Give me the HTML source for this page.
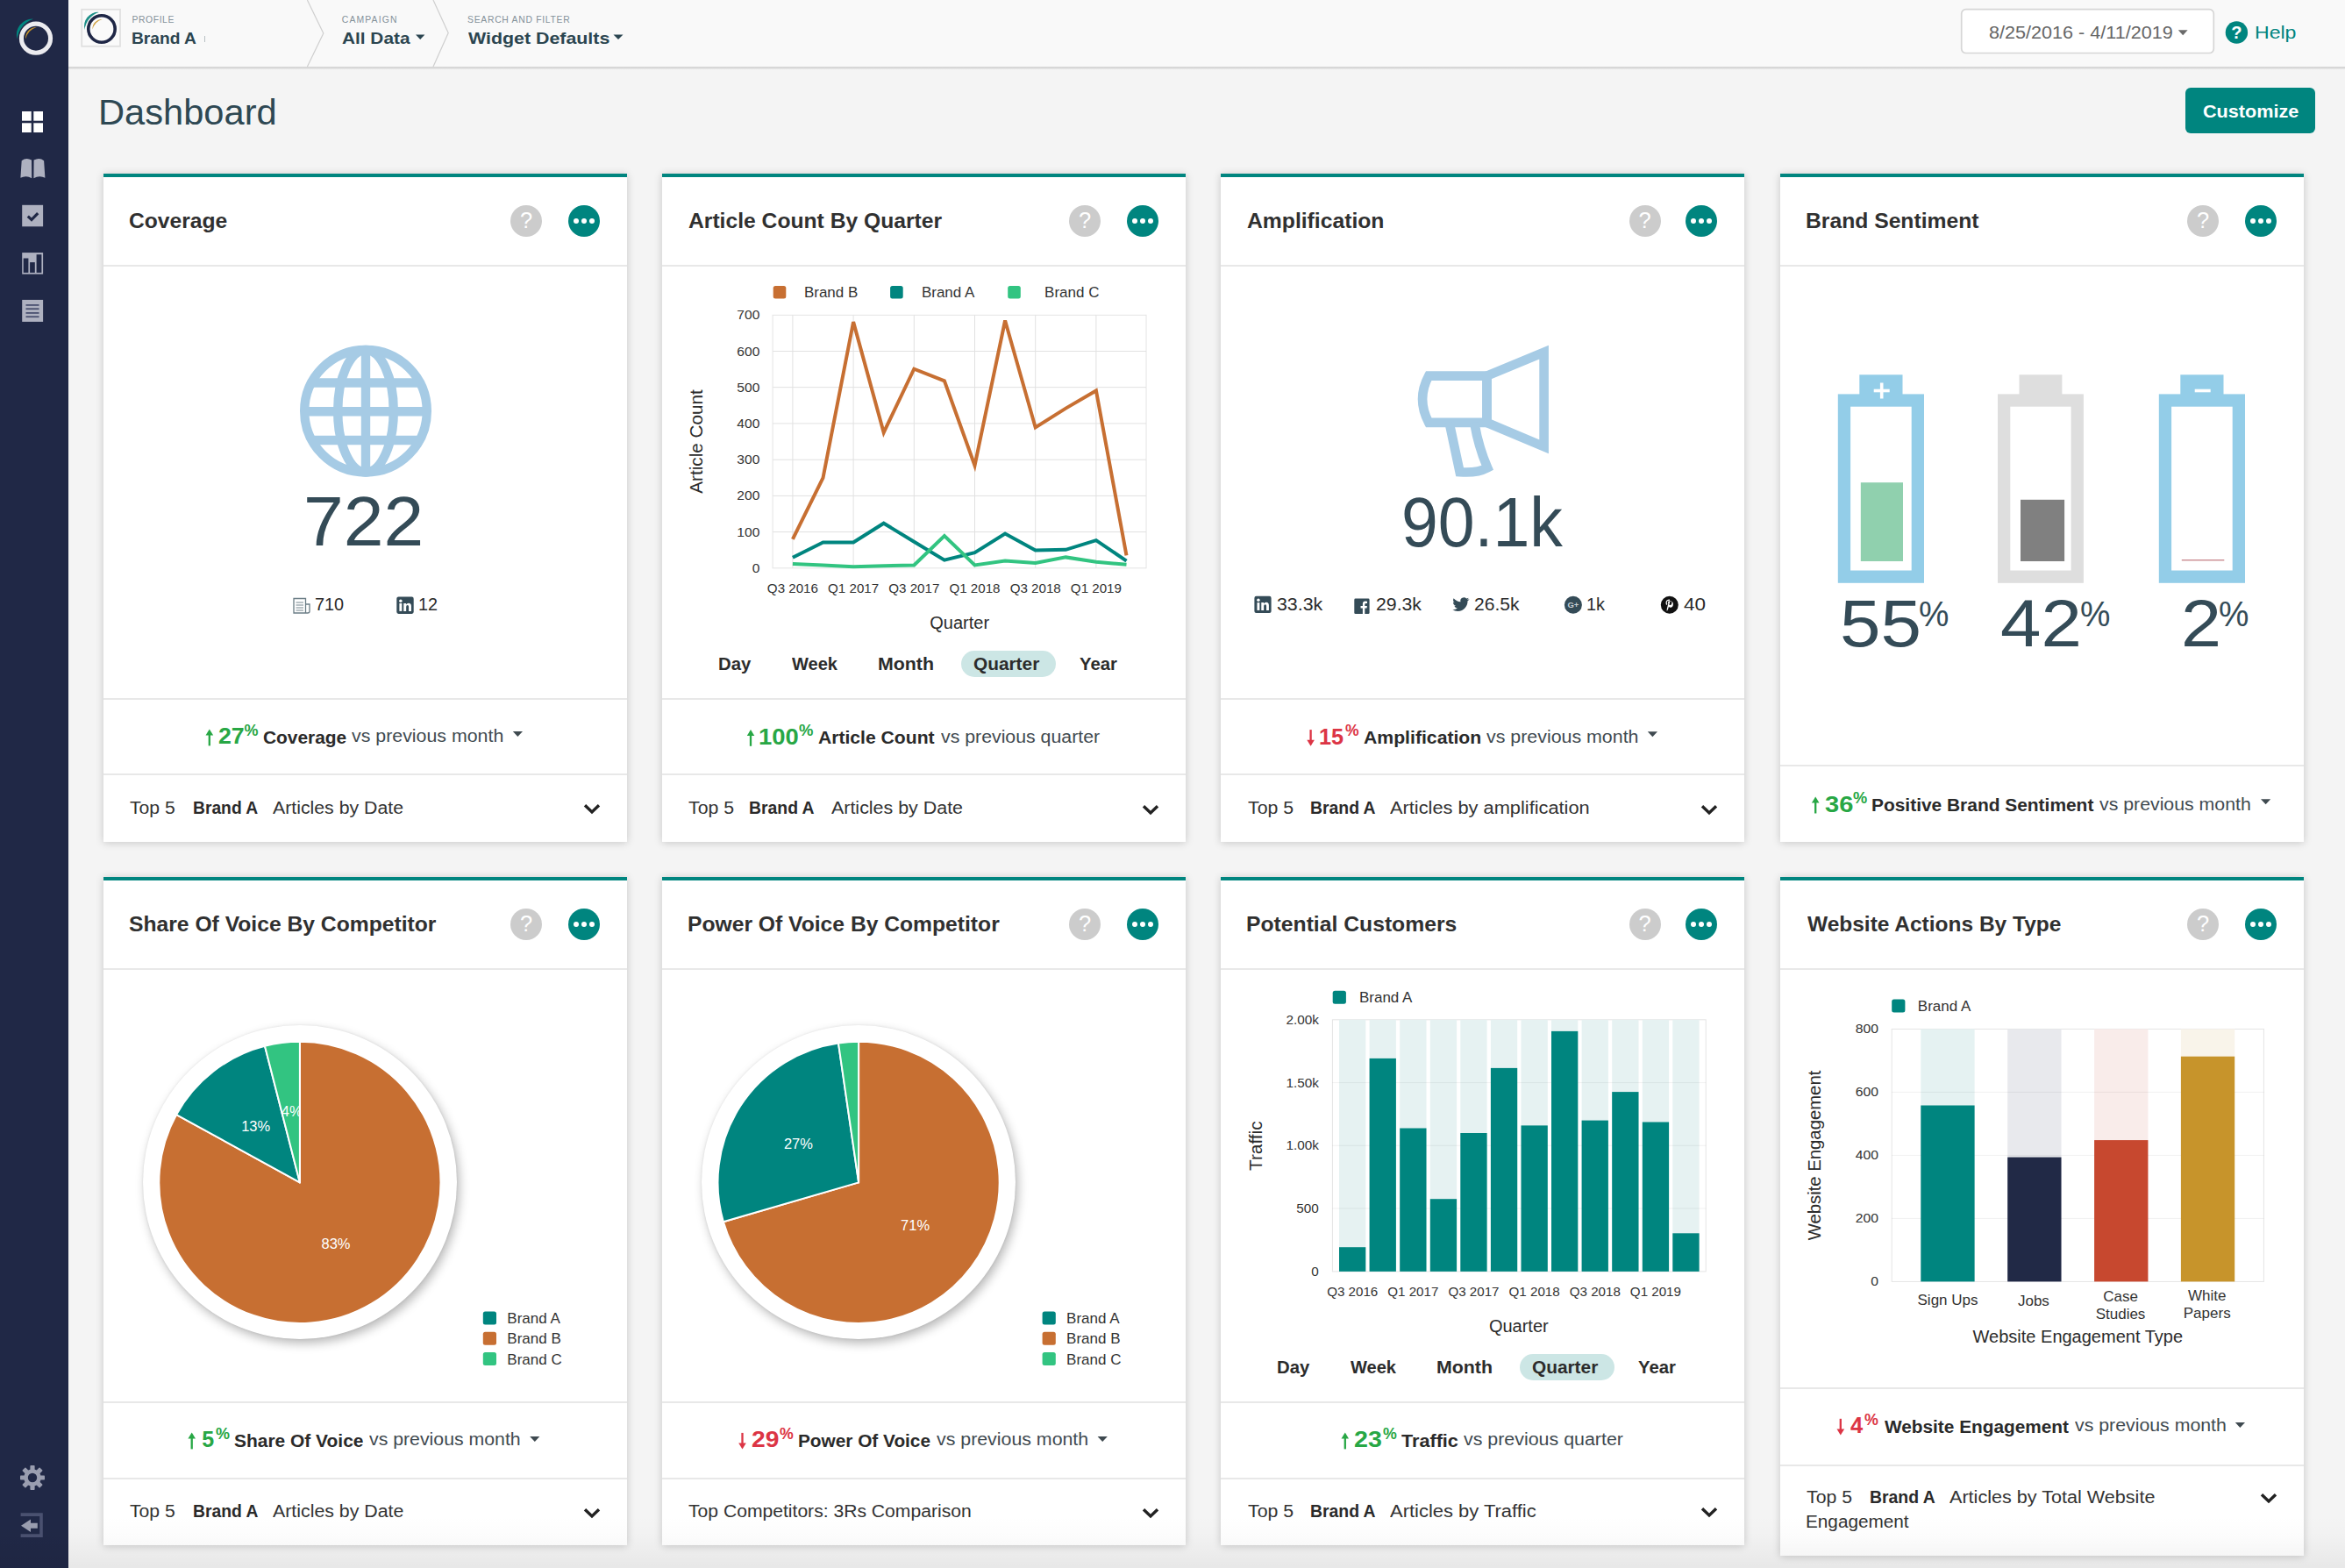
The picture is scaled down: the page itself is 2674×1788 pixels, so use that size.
<!DOCTYPE html><html lang="en"><head><meta charset="utf-8"><title>Dashboard</title><style>
*{box-sizing:border-box;margin:0;padding:0}
html,body{width:2674px;height:1788px;overflow:hidden}
body{background:#f4f4f4;font-family:"Liberation Sans",sans-serif;position:relative;color:#2b2b2b}
.t{position:absolute;white-space:nowrap;line-height:normal}
.abs{position:absolute}
#sidebar{position:absolute;left:0;top:0;width:78px;height:1788px;background:#202846}
#header{position:absolute;left:78px;top:0;width:2596px;height:76px;background:#f9f9f9;border-bottom:0}
#hline{position:absolute;left:78px;top:76px;width:2596px;height:3px;background:linear-gradient(#d2d2d2,#dcdcdc 60%,#ececec)}
.card{position:absolute;background:#fff;border-top:4px solid #00857f;box-shadow:0 1px 9px rgba(0,0,0,.19)}
.sep{position:absolute;left:0;width:100%;height:2px;background:#e8e8e8}
.circ{position:absolute;width:36px;height:36px;border-radius:50%}
svg{position:absolute;overflow:visible}
.pill{position:absolute;background:#cce6e5;border-radius:16px}
</style></head><body>
<div id="sidebar"><svg width="78" height="1788" viewBox="0 0 78 1788"><circle cx="41" cy="43.7" r="16.55" fill="none" stroke="#ebebef" stroke-width="5.1"/><path d="M19.55 44.6 A17.95 17.95 0 0 1 37.76 21.64 A27.7 27.7 0 0 0 19.55 44.6Z" fill="#00857f"/><path d="M29.1 44.6 A12.4 12.4 0 0 1 41.64 30.9 A19.2 19.2 0 0 0 29.1 44.6Z" fill="#c7942b"/><rect x="25" y="127" width="10.7" height="10.7" fill="#fff"/><rect x="38.3" y="127" width="10.7" height="10.7" fill="#fff"/><rect x="25" y="140.3" width="10.7" height="10.7" fill="#fff"/><rect x="38.3" y="140.3" width="10.7" height="10.7" fill="#fff"/><path d="M24.7 183.2 Q30 179 36 182.6 L36.2 203.2 Q30 199.6 23.4 202.8 Z" fill="#aeb1c0"/><path d="M50.1 183.2 Q45 179 38.6 182.6 L38.4 203.2 Q45 199.6 51.4 202.8 Z" fill="#aeb1c0"/><rect x="25.2" y="233.8" width="23.9" height="24.5" fill="#aeb1c0"/><path d="M31.8 246.6 L36 250.6 L43.2 243.2" fill="none" stroke="#202846" stroke-width="3.2"/><rect x="25.2" y="288.1" width="23.9" height="24.5" fill="#aeb1c0"/><rect x="26.7" y="294.5" width="5.7" height="16.4" fill="#202846"/><rect x="34.1" y="299.1" width="5.7" height="11.8" fill="#202846"/><rect x="41.6" y="290.2" width="5.8" height="20.7" fill="#202846"/><rect x="25.2" y="341.9" width="23.9" height="25" fill="#aeb1c0"/><rect x="29.5" y="347.0" width="15" height="1.8" fill="#4a5070"/><rect x="29.5" y="351.3" width="15" height="1.8" fill="#4a5070"/><rect x="29.5" y="356.0" width="15" height="1.8" fill="#4a5070"/><rect x="29.5" y="360.3" width="15" height="1.8" fill="#4a5070"/><g fill="#9a9eb0"><rect x="34.4" y="1671" width="5.2" height="8" rx="0.8" transform="rotate(0 37 1685)"/><rect x="34.4" y="1671" width="5.2" height="8" rx="0.8" transform="rotate(45 37 1685)"/><rect x="34.4" y="1671" width="5.2" height="8" rx="0.8" transform="rotate(90 37 1685)"/><rect x="34.4" y="1671" width="5.2" height="8" rx="0.8" transform="rotate(135 37 1685)"/><rect x="34.4" y="1671" width="5.2" height="8" rx="0.8" transform="rotate(180 37 1685)"/><rect x="34.4" y="1671" width="5.2" height="8" rx="0.8" transform="rotate(225 37 1685)"/><rect x="34.4" y="1671" width="5.2" height="8" rx="0.8" transform="rotate(270 37 1685)"/><rect x="34.4" y="1671" width="5.2" height="8" rx="0.8" transform="rotate(315 37 1685)"/><circle cx="37" cy="1685" r="9.8"/></g><circle cx="37" cy="1685" r="5.2" fill="#202846"/><path d="M23.6 1727.1 H47 V1751.1 H23.6" fill="none" stroke="#4a5170" stroke-width="3.6"/><path d="M24 1739.7 L35 1732.5 V1736.7 H42.8 V1742.7 H35 V1746.9 Z" fill="#9a9eb0"/></svg></div>
<div id="header"></div><div id="hline"></div>
<svg style="left:0;top:0" width="2674" height="80" viewBox="0 0 2674 80"><rect x="93.2" y="10.8" width="43.8" height="42" fill="#fafafa" stroke="#e0e0e0" stroke-width="1.8"/><circle cx="115.97" cy="33" r="15.2" fill="none" stroke="#1f2746" stroke-width="3.6"/><path d="M96.57 33.88 A15.8 15.8 0 0 1 112.69 13.88 A23.6 23.6 0 0 0 96.57 33.88Z" fill="#1d8f88"/><path d="M105.5 33.6 A10.8 10.8 0 0 1 116.6 21.9 A16.5 16.5 0 0 0 105.5 33.6Z" fill="#d0a040"/><path d="M350.4 0 L368.8 37.9 L350.4 76" fill="none" stroke="#cfcfcf" stroke-width="1.2"/><path d="M494 0 L511.2 37.6 L494 76" fill="none" stroke="#cfcfcf" stroke-width="1.2"/><path d="M474 39.5 h10.4 l-5.2 5.6z" fill="#2b4550"/><path d="M699.5 39.5 h11 l-5.5 5.6z" fill="#2b4550"/><rect x="2236.7" y="10.7" width="287.6" height="49.8" rx="5" fill="#fff" stroke="#d6d6d6" stroke-width="1.7"/><path d="M2483.8 34.3 h10.8 l-5.4 6z" fill="#6a6a6a"/><circle cx="2550.4" cy="37" r="12.7" fill="#00857f"/></svg>
<span class="t" style="left:150.50px;top:16.69px;font-size:10.4px;color:#84919a;letter-spacing:0.567px;">PROFILE</span>
<span class="t" style="left:150.09px;top:33.10px;font-size:19px;color:#2b4550;transform:scaleX(1.0098);transform-origin:0 0;font-weight:bold;">Brand A</span>
<div class="abs" style="left:233px;top:41px;width:1px;height:7px;background:#b8c0c4"></div>
<span class="t" style="left:389.80px;top:16.69px;font-size:10.4px;color:#84919a;letter-spacing:1.143px;">CAMPAIGN</span>
<span class="t" style="left:389.86px;top:32.91px;font-size:19px;color:#2b4550;transform:scaleX(1.0950);transform-origin:0 0;font-weight:bold;">All Data</span>
<span class="t" style="left:533.10px;top:16.69px;font-size:10.4px;color:#84919a;letter-spacing:0.694px;">SEARCH AND FILTER</span>
<span class="t" style="left:533.50px;top:32.91px;font-size:19px;color:#2b4550;transform:scaleX(1.1248);transform-origin:0 0;font-weight:bold;">Widget Defaults</span>
<span class="t" style="left:2267.51px;top:26.35px;font-size:19.5px;color:#666;transform:scaleX(1.1076);transform-origin:0 0;">8/25/2016 - 4/11/2019</span>
<span class="t" style="left:2544.3px;top:26.2px;font-size:20px;color:#fff;font-weight:bold;">?</span>
<span class="t" style="left:2570.70px;top:25.45px;font-size:20.5px;color:#00857f;transform:scaleX(1.1256);transform-origin:0 0;">Help</span>
<span class="t" style="left:111.75px;top:104.89px;font-size:41px;color:#2e4853;transform:scaleX(1.0154);transform-origin:0 0;">Dashboard</span>
<div class="abs" style="left:2492px;top:100px;width:148px;height:52px;border-radius:6px;background:#00857f"></div>
<span class="t" style="left:2511.66px;top:114.85px;font-size:20.5px;color:#fff;transform:scaleX(1.0538);transform-origin:0 0;font-weight:bold;">Customize</span>
<div class="card" style="left:118px;top:198px;width:596.5px;height:762px"><div class="sep" style="top:100px"></div><div class="sep" style="top:594px"></div><div class="sep" style="top:680px"></div><div class="circ" style="left:464.2px;top:31.700000000000003px;background:#ccc"></div><div class="circ" style="left:530px;top:31.700000000000003px;background:#00857f"></div><div class="abs" style="left:535.5999999999999px;top:46.5px;width:6.4px;height:6.4px;border-radius:50%;background:#fff"></div><div class="abs" style="left:544.8px;top:46.5px;width:6.4px;height:6.4px;border-radius:50%;background:#fff"></div><div class="abs" style="left:554.0px;top:46.5px;width:6.4px;height:6.4px;border-radius:50%;background:#fff"></div></div>
<span class="t" style="left:146.88px;top:237.58px;font-size:24px;color:#303030;transform:scaleX(1.0260);transform-origin:0 0;font-weight:bold;">Coverage</span>
<span class="t" style="left:593.1px;top:237.4px;font-size:25.5px;color:#fff;">?</span>
<div class="card" style="left:755px;top:198px;width:596.5px;height:762px"><div class="sep" style="top:100px"></div><div class="sep" style="top:594px"></div><div class="sep" style="top:680px"></div><div class="circ" style="left:464.2px;top:31.700000000000003px;background:#ccc"></div><div class="circ" style="left:530px;top:31.700000000000003px;background:#00857f"></div><div class="abs" style="left:535.5999999999999px;top:46.5px;width:6.4px;height:6.4px;border-radius:50%;background:#fff"></div><div class="abs" style="left:544.8px;top:46.5px;width:6.4px;height:6.4px;border-radius:50%;background:#fff"></div><div class="abs" style="left:554.0px;top:46.5px;width:6.4px;height:6.4px;border-radius:50%;background:#fff"></div></div>
<span class="t" style="left:784.88px;top:237.58px;font-size:24px;color:#303030;transform:scaleX(1.0275);transform-origin:0 0;font-weight:bold;">Article Count By Quarter</span>
<span class="t" style="left:1230.1px;top:237.4px;font-size:25.5px;color:#fff;">?</span>
<div class="card" style="left:1392px;top:198px;width:596.5px;height:762px"><div class="sep" style="top:100px"></div><div class="sep" style="top:594px"></div><div class="sep" style="top:680px"></div><div class="circ" style="left:465.6px;top:31.700000000000003px;background:#ccc"></div><div class="circ" style="left:530px;top:31.700000000000003px;background:#00857f"></div><div class="abs" style="left:535.5999999999999px;top:46.5px;width:6.4px;height:6.4px;border-radius:50%;background:#fff"></div><div class="abs" style="left:544.8px;top:46.5px;width:6.4px;height:6.4px;border-radius:50%;background:#fff"></div><div class="abs" style="left:554.0px;top:46.5px;width:6.4px;height:6.4px;border-radius:50%;background:#fff"></div></div>
<span class="t" style="left:1422.28px;top:237.58px;font-size:24px;color:#303030;transform:scaleX(1.0293);transform-origin:0 0;font-weight:bold;">Amplification</span>
<span class="t" style="left:1868.5px;top:237.4px;font-size:25.5px;color:#fff;">?</span>
<div class="card" style="left:2030px;top:198px;width:596.5px;height:762px"><div class="sep" style="top:100px"></div><div class="sep" style="top:670px"></div><div class="circ" style="left:464.2px;top:31.700000000000003px;background:#ccc"></div><div class="circ" style="left:530px;top:31.700000000000003px;background:#00857f"></div><div class="abs" style="left:535.5999999999999px;top:46.5px;width:6.4px;height:6.4px;border-radius:50%;background:#fff"></div><div class="abs" style="left:544.8px;top:46.5px;width:6.4px;height:6.4px;border-radius:50%;background:#fff"></div><div class="abs" style="left:554.0px;top:46.5px;width:6.4px;height:6.4px;border-radius:50%;background:#fff"></div></div>
<span class="t" style="left:2059.25px;top:237.58px;font-size:24px;color:#303030;transform:scaleX(1.0284);transform-origin:0 0;font-weight:bold;">Brand Sentiment</span>
<span class="t" style="left:2505.1px;top:237.4px;font-size:25.5px;color:#fff;">?</span>
<div class="card" style="left:118px;top:1000px;width:596.5px;height:762px"><div class="sep" style="top:100px"></div><div class="sep" style="top:594px"></div><div class="sep" style="top:680.5px"></div><div class="circ" style="left:464.2px;top:31.700000000000003px;background:#ccc"></div><div class="circ" style="left:530px;top:31.700000000000003px;background:#00857f"></div><div class="abs" style="left:535.5999999999999px;top:46.5px;width:6.4px;height:6.4px;border-radius:50%;background:#fff"></div><div class="abs" style="left:544.8px;top:46.5px;width:6.4px;height:6.4px;border-radius:50%;background:#fff"></div><div class="abs" style="left:554.0px;top:46.5px;width:6.4px;height:6.4px;border-radius:50%;background:#fff"></div></div>
<span class="t" style="left:146.58px;top:1039.58px;font-size:24px;color:#303030;transform:scaleX(1.0276);transform-origin:0 0;font-weight:bold;">Share Of Voice By Competitor</span>
<span class="t" style="left:593.1px;top:1039.4px;font-size:25.5px;color:#fff;">?</span>
<div class="card" style="left:755px;top:1000px;width:596.5px;height:762px"><div class="sep" style="top:100px"></div><div class="sep" style="top:594px"></div><div class="sep" style="top:680.5px"></div><div class="circ" style="left:464.2px;top:31.700000000000003px;background:#ccc"></div><div class="circ" style="left:530px;top:31.700000000000003px;background:#00857f"></div><div class="abs" style="left:535.5999999999999px;top:46.5px;width:6.4px;height:6.4px;border-radius:50%;background:#fff"></div><div class="abs" style="left:544.8px;top:46.5px;width:6.4px;height:6.4px;border-radius:50%;background:#fff"></div><div class="abs" style="left:554.0px;top:46.5px;width:6.4px;height:6.4px;border-radius:50%;background:#fff"></div></div>
<span class="t" style="left:783.56px;top:1039.58px;font-size:24px;color:#303030;transform:scaleX(1.0273);transform-origin:0 0;font-weight:bold;">Power Of Voice By Competitor</span>
<span class="t" style="left:1230.1px;top:1039.4px;font-size:25.5px;color:#fff;">?</span>
<div class="card" style="left:1392px;top:1000px;width:596.5px;height:762px"><div class="sep" style="top:100px"></div><div class="sep" style="top:594px"></div><div class="sep" style="top:680.5px"></div><div class="circ" style="left:465.6px;top:31.700000000000003px;background:#ccc"></div><div class="circ" style="left:530px;top:31.700000000000003px;background:#00857f"></div><div class="abs" style="left:535.5999999999999px;top:46.5px;width:6.4px;height:6.4px;border-radius:50%;background:#fff"></div><div class="abs" style="left:544.8px;top:46.5px;width:6.4px;height:6.4px;border-radius:50%;background:#fff"></div><div class="abs" style="left:554.0px;top:46.5px;width:6.4px;height:6.4px;border-radius:50%;background:#fff"></div></div>
<span class="t" style="left:1421.25px;top:1039.58px;font-size:24px;color:#303030;transform:scaleX(1.0295);transform-origin:0 0;font-weight:bold;">Potential Customers</span>
<span class="t" style="left:1868.5px;top:1039.4px;font-size:25.5px;color:#fff;">?</span>
<div class="card" style="left:2030px;top:1000px;width:596.5px;height:774px"><div class="sep" style="top:100px"></div><div class="sep" style="top:578px"></div><div class="sep" style="top:665.5px"></div><div class="circ" style="left:464.2px;top:31.700000000000003px;background:#ccc"></div><div class="circ" style="left:530px;top:31.700000000000003px;background:#00857f"></div><div class="abs" style="left:535.5999999999999px;top:46.5px;width:6.4px;height:6.4px;border-radius:50%;background:#fff"></div><div class="abs" style="left:544.8px;top:46.5px;width:6.4px;height:6.4px;border-radius:50%;background:#fff"></div><div class="abs" style="left:554.0px;top:46.5px;width:6.4px;height:6.4px;border-radius:50%;background:#fff"></div></div>
<span class="t" style="left:2060.90px;top:1039.58px;font-size:24px;color:#303030;transform:scaleX(1.0201);transform-origin:0 0;font-weight:bold;">Website Actions By Type</span>
<span class="t" style="left:2505.1px;top:1039.4px;font-size:25.5px;color:#fff;">?</span>
<svg style="left:0;top:0" width="2674" height="1788" viewBox="0 0 2674 1788"><path d="M238.8 850.4 V834.1" stroke="#28a745" stroke-width="2.3" fill="none"/><path d="M234.5 838.5 L238.8 831.5 L243.2 838.5 Z" fill="#28a745"/><path d="M584.8 834.1 h11.2 l-5.6 6z" fill="#3f4a50"/></svg>
<span class="t" style="left:248.64px;top:825.48px;font-size:25px;color:#28a745;transform:scaleX(1.0692);transform-origin:0 0;font-weight:bold;">27</span>
<span class="t" style="left:278.60px;top:822.61px;font-size:18px;color:#28a745;transform:scaleX(1.0000);transform-origin:0 0;font-weight:bold;">%</span>
<span class="t" style="left:300.06px;top:830.00px;font-size:20px;color:#2a2a2a;transform:scaleX(1.0446);transform-origin:0 0;font-weight:bold;">Coverage</span>
<span class="t" style="left:401.00px;top:828.40px;font-size:20px;color:#3f4a50;transform:scaleX(1.0677);transform-origin:0 0;">vs previous month</span>
<svg style="left:0;top:0" width="2674" height="1788" viewBox="0 0 2674 1788"><path d="M856.0 850.8 V834.5" stroke="#28a745" stroke-width="2.3" fill="none"/><path d="M851.8 838.9 L856.0 831.9 L860.3 838.9 Z" fill="#28a745"/></svg>
<span class="t" style="left:864.66px;top:825.88px;font-size:25px;color:#28a745;transform:scaleX(1.0944);transform-origin:0 0;font-weight:bold;">100</span>
<span class="t" style="left:910.89px;top:823.01px;font-size:18px;color:#28a745;transform:scaleX(1.0263);transform-origin:0 0;font-weight:bold;">%</span>
<span class="t" style="left:932.87px;top:830.40px;font-size:20px;color:#2a2a2a;transform:scaleX(1.0560);transform-origin:0 0;font-weight:bold;">Article Count</span>
<span class="t" style="left:1072.60px;top:828.80px;font-size:20px;color:#3f4a50;transform:scaleX(1.0648);transform-origin:0 0;">vs previous quarter</span>
<svg style="left:0;top:0" width="2674" height="1788" viewBox="0 0 2674 1788"><path d="M1494.6 832.1 V846.3" stroke="#dc3545" stroke-width="2.3" fill="none"/><path d="M1490.3 843.7 L1494.6 850.7 L1498.9 843.7 Z" fill="#dc3545"/><path d="M1878.8 834.3 h11.2 l-5.6 6z" fill="#3f4a50"/></svg>
<span class="t" style="left:1504.28px;top:825.67px;font-size:25px;color:#dc3545;transform:scaleX(1.0117);transform-origin:0 0;font-weight:bold;">15</span>
<span class="t" style="left:1534.11px;top:822.81px;font-size:18px;color:#dc3545;transform:scaleX(0.9737);transform-origin:0 0;font-weight:bold;">%</span>
<span class="t" style="left:1554.97px;top:830.20px;font-size:20px;color:#2a2a2a;transform:scaleX(1.0600);transform-origin:0 0;font-weight:bold;">Amplification</span>
<span class="t" style="left:1694.60px;top:828.60px;font-size:20px;color:#3f4a50;transform:scaleX(1.0689);transform-origin:0 0;">vs previous month</span>
<svg style="left:0;top:0" width="2674" height="1788" viewBox="0 0 2674 1788"><path d="M2070.2 927.5 V911.2" stroke="#28a745" stroke-width="2.3" fill="none"/><path d="M2065.9 915.6 L2070.2 908.6 L2074.5 915.6 Z" fill="#28a745"/><path d="M2578.0 911.2 h11.2 l-5.6 6z" fill="#3f4a50"/></svg>
<span class="t" style="left:2080.72px;top:902.58px;font-size:25px;color:#28a745;transform:scaleX(1.1629);transform-origin:0 0;font-weight:bold;">36</span>
<span class="t" style="left:2112.99px;top:899.71px;font-size:18px;color:#28a745;transform:scaleX(1.0132);transform-origin:0 0;font-weight:bold;">%</span>
<span class="t" style="left:2134.34px;top:907.10px;font-size:20px;color:#2a2a2a;transform:scaleX(1.0457);transform-origin:0 0;font-weight:bold;">Positive Brand Sentiment</span>
<span class="t" style="left:2394.20px;top:905.50px;font-size:20px;color:#3f4a50;transform:scaleX(1.0646);transform-origin:0 0;">vs previous month</span>
<svg style="left:0;top:0" width="2674" height="1788" viewBox="0 0 2674 1788"><path d="M218.7 1652.4 V1636.1" stroke="#28a745" stroke-width="2.3" fill="none"/><path d="M214.4 1640.5 L218.7 1633.5 L223.0 1640.5 Z" fill="#28a745"/><path d="M604.2 1638.1 h11.2 l-5.6 6z" fill="#3f4a50"/></svg>
<span class="t" style="left:230.30px;top:1627.47px;font-size:25px;color:#28a745;transform:scaleX(1.0000);transform-origin:0 0;font-weight:bold;">5</span>
<span class="t" style="left:245.90px;top:1624.61px;font-size:18px;color:#28a745;transform:scaleX(1.0000);transform-origin:0 0;font-weight:bold;">%</span>
<span class="t" style="left:267.08px;top:1632.00px;font-size:20px;color:#2a2a2a;transform:scaleX(1.0472);transform-origin:0 0;font-weight:bold;">Share Of Voice</span>
<span class="t" style="left:421.00px;top:1630.40px;font-size:20px;color:#3f4a50;transform:scaleX(1.0639);transform-origin:0 0;">vs previous month</span>
<svg style="left:0;top:0" width="2674" height="1788" viewBox="0 0 2674 1788"><path d="M846.5 1633.9 V1648.1" stroke="#dc3545" stroke-width="2.3" fill="none"/><path d="M842.2 1645.5 L846.5 1652.5 L850.8 1645.5 Z" fill="#dc3545"/><path d="M1251.6 1638.1 h11.2 l-5.6 6z" fill="#3f4a50"/></svg>
<span class="t" style="left:856.70px;top:1627.47px;font-size:25px;color:#dc3545;transform:scaleX(1.1303);transform-origin:0 0;font-weight:bold;">29</span>
<span class="t" style="left:889.41px;top:1624.61px;font-size:18px;color:#dc3545;transform:scaleX(0.9868);transform-origin:0 0;font-weight:bold;">%</span>
<span class="t" style="left:910.35px;top:1632.00px;font-size:20px;color:#2a2a2a;transform:scaleX(1.0398);transform-origin:0 0;font-weight:bold;">Power Of Voice</span>
<span class="t" style="left:1067.80px;top:1630.40px;font-size:20px;color:#3f4a50;transform:scaleX(1.0670);transform-origin:0 0;">vs previous month</span>
<svg style="left:0;top:0" width="2674" height="1788" viewBox="0 0 2674 1788"><path d="M1533.8 1652.4 V1636.1" stroke="#28a745" stroke-width="2.3" fill="none"/><path d="M1529.5 1640.5 L1533.8 1633.5 L1538.0 1640.5 Z" fill="#28a745"/></svg>
<span class="t" style="left:1543.59px;top:1627.47px;font-size:25px;color:#28a745;transform:scaleX(1.1418);transform-origin:0 0;font-weight:bold;">23</span>
<span class="t" style="left:1576.61px;top:1624.61px;font-size:18px;color:#28a745;transform:scaleX(0.9868);transform-origin:0 0;font-weight:bold;">%</span>
<span class="t" style="left:1598.28px;top:1632.00px;font-size:20px;color:#2a2a2a;transform:scaleX(1.0809);transform-origin:0 0;font-weight:bold;">Traffic</span>
<span class="t" style="left:1669.20px;top:1630.40px;font-size:20px;color:#3f4a50;transform:scaleX(1.0695);transform-origin:0 0;">vs previous quarter</span>
<svg style="left:0;top:0" width="2674" height="1788" viewBox="0 0 2674 1788"><path d="M2098.8 1617.8 V1632.0" stroke="#dc3545" stroke-width="2.3" fill="none"/><path d="M2094.5 1629.4 L2098.8 1636.4 L2103.2 1629.4 Z" fill="#dc3545"/><path d="M2548.8 1622.0 h11.2 l-5.6 6z" fill="#3f4a50"/></svg>
<span class="t" style="left:2109.79px;top:1611.38px;font-size:25px;color:#dc3545;transform:scaleX(1.0222);transform-origin:0 0;font-weight:bold;">4</span>
<span class="t" style="left:2126.30px;top:1608.51px;font-size:18px;color:#dc3545;transform:scaleX(0.9934);transform-origin:0 0;font-weight:bold;">%</span>
<span class="t" style="left:2148.80px;top:1615.90px;font-size:20px;color:#2a2a2a;transform:scaleX(1.0397);transform-origin:0 0;font-weight:bold;">Website Engagement</span>
<span class="t" style="left:2365.70px;top:1614.30px;font-size:20px;color:#3f4a50;transform:scaleX(1.0652);transform-origin:0 0;">vs previous month</span>
<span class="t" style="left:147.88px;top:909.70px;font-size:20px;color:#333;transform:scaleX(1.0587);transform-origin:0 0;">Top 5</span>
<span class="t" style="left:219.92px;top:910.15px;font-size:19.5px;color:#2a2a2a;transform:scaleX(0.9877);transform-origin:0 0;font-weight:bold;">Brand A</span>
<span class="t" style="left:311.00px;top:909.70px;font-size:20px;color:#333;transform:scaleX(1.0639);transform-origin:0 0;">Articles by Date</span>
<svg style="left:664.5px;top:915.3px" width="20" height="16" viewBox="0 0 20 16"><path d="M2 3.2 L10 11 L18 3.2" fill="none" stroke="#222" stroke-width="3.4"/></svg>
<span class="t" style="left:785.17px;top:909.90px;font-size:20px;color:#333;transform:scaleX(1.0650);transform-origin:0 0;">Top 5</span>
<span class="t" style="left:854.11px;top:910.35px;font-size:19.5px;color:#2a2a2a;transform:scaleX(0.9932);transform-origin:0 0;font-weight:bold;">Brand A</span>
<span class="t" style="left:948.20px;top:909.90px;font-size:20px;color:#333;transform:scaleX(1.0711);transform-origin:0 0;">Articles by Date</span>
<svg style="left:1301.5px;top:915.5px" width="20" height="16" viewBox="0 0 20 16"><path d="M2 3.2 L10 11 L18 3.2" fill="none" stroke="#222" stroke-width="3.4"/></svg>
<span class="t" style="left:1422.57px;top:909.90px;font-size:20px;color:#333;transform:scaleX(1.0650);transform-origin:0 0;">Top 5</span>
<span class="t" style="left:1493.51px;top:910.35px;font-size:19.5px;color:#2a2a2a;transform:scaleX(0.9932);transform-origin:0 0;font-weight:bold;">Brand A</span>
<span class="t" style="left:1585.30px;top:909.90px;font-size:20px;color:#333;transform:scaleX(1.0896);transform-origin:0 0;">Articles by amplification</span>
<svg style="left:1938.5px;top:915.5px" width="20" height="16" viewBox="0 0 20 16"><path d="M2 3.2 L10 11 L18 3.2" fill="none" stroke="#222" stroke-width="3.4"/></svg>
<span class="t" style="left:147.88px;top:1711.90px;font-size:20px;color:#333;transform:scaleX(1.0587);transform-origin:0 0;">Top 5</span>
<span class="t" style="left:219.91px;top:1712.35px;font-size:19.5px;color:#2a2a2a;transform:scaleX(0.9905);transform-origin:0 0;font-weight:bold;">Brand A</span>
<span class="t" style="left:310.90px;top:1711.90px;font-size:20px;color:#333;transform:scaleX(1.0668);transform-origin:0 0;">Articles by Date</span>
<svg style="left:664.5px;top:1717.5px" width="20" height="16" viewBox="0 0 20 16"><path d="M2 3.2 L10 11 L18 3.2" fill="none" stroke="#222" stroke-width="3.4"/></svg>
<span class="t" style="left:785.18px;top:1711.90px;font-size:20px;color:#333;transform:scaleX(1.0556);transform-origin:0 0;">Top Competitors: 3Rs Comparison</span>
<svg style="left:1301.5px;top:1717.5px" width="20" height="16" viewBox="0 0 20 16"><path d="M2 3.2 L10 11 L18 3.2" fill="none" stroke="#222" stroke-width="3.4"/></svg>
<span class="t" style="left:1422.57px;top:1711.70px;font-size:20px;color:#333;transform:scaleX(1.0650);transform-origin:0 0;">Top 5</span>
<span class="t" style="left:1493.51px;top:1712.15px;font-size:19.5px;color:#2a2a2a;transform:scaleX(0.9932);transform-origin:0 0;font-weight:bold;">Brand A</span>
<span class="t" style="left:1585.30px;top:1711.70px;font-size:20px;color:#333;transform:scaleX(1.0971);transform-origin:0 0;">Articles by Traffic</span>
<svg style="left:1938.5px;top:1717.3px" width="20" height="16" viewBox="0 0 20 16"><path d="M2 3.2 L10 11 L18 3.2" fill="none" stroke="#222" stroke-width="3.4"/></svg>
<span class="t" style="left:2060.07px;top:1695.50px;font-size:20px;color:#333;transform:scaleX(1.0629);transform-origin:0 0;">Top 5</span>
<span class="t" style="left:2132.01px;top:1695.95px;font-size:19.5px;color:#2a2a2a;transform:scaleX(0.9945);transform-origin:0 0;font-weight:bold;">Brand A</span>
<span class="t" style="left:2222.70px;top:1695.50px;font-size:20px;color:#333;transform:scaleX(1.0795);transform-origin:0 0;">Articles by Total Website</span>
<svg style="left:2576.5px;top:1701.1px" width="20" height="16" viewBox="0 0 20 16"><path d="M2 3.2 L10 11 L18 3.2" fill="none" stroke="#222" stroke-width="3.4"/></svg>
<span class="t" style="left:2058.84px;top:1724.10px;font-size:20px;color:#333;transform:scaleX(1.0367);transform-origin:0 0;">Engagement</span>
<svg style="left:0;top:0" width="2674" height="1788" viewBox="0 0 2674 1788"><g fill="none" stroke="#a6cbe5" stroke-width="10.4"><circle cx="417" cy="468.8" r="69.8"/><ellipse cx="417" cy="468.8" rx="31.8" ry="69.8"/><path d="M417 398.8 V538.8"/><path d="M347 469.3 H487"/><path d="M355 436.5 H479"/><path d="M355 502.0 H479"/></g><g fill="none" stroke="#6b7d86" stroke-width="1.3"><path d="M335 682.5 h13.5 v16.5 h-13.5z M348.5 689 h4.5 v8 q0 2 -2.2 2 h-14"/></g><rect x="337.5" y="686.4" width="8.5" height="1.2" fill="#8c9aa1"/><rect x="337.5" y="689.4" width="8.5" height="1.2" fill="#8c9aa1"/><rect x="337.5" y="692.4" width="8.5" height="1.2" fill="#8c9aa1"/><rect x="337.5" y="695.4" width="8.5" height="1.2" fill="#8c9aa1"/><g transform="translate(452.3 680.6) scale(0.97)"><rect x="0" y="0" width="20" height="20" rx="2.2" fill="#344b57"/><rect x="3.2" y="7.6" width="3" height="9.2" fill="#fff"/><circle cx="4.7" cy="4.7" r="1.8" fill="#fff"/><path d="M8.2 7.6 h2.9 v1.3 q1-1.6 3-1.6 q3.1 0 3.1 3.7 v5.8 h-3 v-5.2 q0-1.8-1.4-1.8 q-1.6 0-1.6 1.9 v5.1 h-3z" fill="#fff"/></g></svg>
<span class="t" style="left:346.29px;top:549.10px;font-size:80px;color:#344b57;transform:scaleX(1.0271);transform-origin:0 0;">722</span>
<span class="t" style="left:359.43px;top:677.15px;font-size:20.5px;color:#2b2b2b;transform:scaleX(0.9691);transform-origin:0 0;">710</span>
<span class="t" style="left:477.35px;top:677.15px;font-size:20.5px;color:#2b2b2b;transform:scaleX(0.9655);transform-origin:0 0;">12</span>
<svg style="left:0;top:0" width="2674" height="1788" viewBox="0 0 2674 1788"><rect x="881.1" y="359.3" width="425.9" height="288.49999999999994" fill="#fff" stroke="#e4e4e4" stroke-width="1"/><path d="M881.1 606.6 H1307 M881.1 565.4 H1307 M881.1 524.2 H1307 M881.1 482.9 H1307 M881.1 441.7 H1307 M881.1 400.5 H1307 M903.9 359.3 V647.8 M973.1 359.3 V647.8 M1042.3 359.3 V647.8 M1111.5 359.3 V647.8 M1180.7 359.3 V647.8 M1249.9 359.3 V647.8 " stroke="#e1e1e1" stroke-width="1" fill="none"/><path d="M903.9 614.8 L938.5 544.8 L973.1 367.1 L1007.7 493.2 L1042.3 420.7 L1076.9 434.3 L1111.5 530.8 L1146.1 365.5 L1180.7 487.5 L1215.3 465.6 L1249.9 445.4 L1284.5 633.4" fill="none" stroke="#c76f32" stroke-width="4" stroke-linejoin="miter"/><path d="M903.9 635.8 L938.5 618.5 L973.1 618.5 L1007.7 596.7 L1042.3 617.7 L1076.9 638.7 L1111.5 630.1 L1146.1 608.6 L1180.7 627.6 L1215.3 626.8 L1249.9 616.1 L1284.5 639.6" fill="none" stroke="#00857f" stroke-width="4" stroke-linejoin="miter"/><path d="M903.9 642.9 L938.5 644.5 L973.1 646.2 L1007.7 645.3 L1042.3 644.5 L1076.9 611.1 L1111.5 644.5 L1146.1 639.6 L1180.7 642.0 L1215.3 635.4 L1249.9 640.8 L1284.5 643.7" fill="none" stroke="#32c481" stroke-width="4" stroke-linejoin="miter"/><rect x="881.7" y="326" width="14.6" height="14.6" rx="2.5" fill="#c76f32"/><rect x="1015.1" y="326" width="14.6" height="14.6" rx="2.5" fill="#00857f"/><rect x="1149.2" y="326" width="14.6" height="14.6" rx="2.5" fill="#32c481"/><text transform="translate(916.9 339.2) scale(1.03 1)" font-size="16.5" fill="#333">Brand B</text><text transform="translate(1050.9 339.2) scale(1.03 1)" font-size="16.5" fill="#333">Brand A</text><text transform="translate(1191.1 339.2) scale(1.03 1)" font-size="16.5" fill="#333">Brand C</text><text transform="translate(866.3 652.8) scale(1.09 1)" font-size="14.3" fill="#333" text-anchor="end">0</text><text transform="translate(866.3 611.6) scale(1.09 1)" font-size="14.3" fill="#333" text-anchor="end">100</text><text transform="translate(866.3 570.4) scale(1.09 1)" font-size="14.3" fill="#333" text-anchor="end">200</text><text transform="translate(866.3 529.2) scale(1.09 1)" font-size="14.3" fill="#333" text-anchor="end">300</text><text transform="translate(866.3 487.9) scale(1.09 1)" font-size="14.3" fill="#333" text-anchor="end">400</text><text transform="translate(866.3 446.7) scale(1.09 1)" font-size="14.3" fill="#333" text-anchor="end">500</text><text transform="translate(866.3 405.5) scale(1.09 1)" font-size="14.3" fill="#333" text-anchor="end">600</text><text transform="translate(866.3 364.3) scale(1.09 1)" font-size="14.3" fill="#333" text-anchor="end">700</text><text transform="translate(903.9 675.7) scale(1.06 1)" font-size="14.3" fill="#333" text-anchor="middle">Q3 2016</text><text transform="translate(973.1 675.7) scale(1.06 1)" font-size="14.3" fill="#333" text-anchor="middle">Q1 2017</text><text transform="translate(1042.3 675.7) scale(1.06 1)" font-size="14.3" fill="#333" text-anchor="middle">Q3 2017</text><text transform="translate(1111.5 675.7) scale(1.06 1)" font-size="14.3" fill="#333" text-anchor="middle">Q1 2018</text><text transform="translate(1180.7 675.7) scale(1.06 1)" font-size="14.3" fill="#333" text-anchor="middle">Q3 2018</text><text transform="translate(1249.9 675.7) scale(1.06 1)" font-size="14.3" fill="#333" text-anchor="middle">Q1 2019</text><text transform="translate(1094.2 716.5)" font-size="20" fill="#2b2b2b" text-anchor="middle">Quarter</text><text transform="translate(800.5 503.5) rotate(-90) scale(1.035 1)" font-size="20" fill="#2b2b2b" text-anchor="middle">Article Count</text></svg>
<div class="pill" style="left:1095.5px;top:741.7px;width:108.2px;height:30.5px"></div>
<span class="t" style="left:818.65px;top:745.20px;font-size:21px;color:#2c2c2c;transform:scaleX(0.9676);transform-origin:0 0;font-weight:bold;">Day</span>
<span class="t" style="left:903.00px;top:745.20px;font-size:21px;color:#2c2c2c;transform:scaleX(0.9541);transform-origin:0 0;font-weight:bold;">Week</span>
<span class="t" style="left:1000.58px;top:745.20px;font-size:21px;color:#2c2c2c;transform:scaleX(1.0166);transform-origin:0 0;font-weight:bold;">Month</span>
<span class="t" style="left:1110.01px;top:745.20px;font-size:21px;color:#2c2c2c;transform:scaleX(0.9920);transform-origin:0 0;font-weight:bold;">Quarter</span>
<span class="t" style="left:1231.21px;top:745.20px;font-size:21px;color:#2c2c2c;transform:scaleX(0.9658);transform-origin:0 0;font-weight:bold;">Year</span>
<svg style="left:0;top:0" width="2674" height="1788" viewBox="0 0 2674 1788"><g fill="none" stroke="#a6cbe5" stroke-width="10.6" stroke-linejoin="miter"><path d="M1695.5 428.6 L1629.2 428.6 Q1614.9 455.3 1629.2 481.9 L1695.5 481.9 Z"/><path d="M1695.5 428.6 L1760.6 401.6 L1760.6 509.3 L1695.5 481.9 Z"/><path d="M1652.6 481.9 L1664.6 538.2 Q1684.2 539.8 1696.2 533.3 Q1685.8 509.6 1681.2 481.9"/></g><g transform="translate(1430.4 679.8) scale(0.96)"><rect x="0" y="0" width="20" height="20" rx="2.2" fill="#344b57"/><rect x="3.2" y="7.6" width="3" height="9.2" fill="#fff"/><circle cx="4.7" cy="4.7" r="1.8" fill="#fff"/><path d="M8.2 7.6 h2.9 v1.3 q1-1.6 3-1.6 q3.1 0 3.1 3.7 v5.8 h-3 v-5.2 q0-1.8-1.4-1.8 q-1.6 0-1.6 1.9 v5.1 h-3z" fill="#fff"/></g><g transform="translate(1544.3 682.6) scale(0.93)"><rect width="18.6" height="18.8" rx="1.5" fill="#344b57"/><path d="M12.9 19 v-7.2 h2.4 l.4-2.9 h-2.8 v-1.8 q0-1.2 1.3-1.2 h1.6 v-2.6 q-.8-.1-2.2-.1 q-3.3 0-3.3 3.4 v2.3 h-2.5 v2.9 h2.5 v7.2z" fill="#fff"/></g><g transform="translate(1656.3 679.5) scale(0.8)"><path d="M23.6 4.6c-.9.4-1.8.6-2.8.8 1-.6 1.8-1.6 2.1-2.700-.9.600-2 1-3.100 1.200a4.800 4.800 0 0 0-8.300 4.400C7.500 8.100 4 6.200 1.600 3.300c-1.300 2.200-.7 5 1.500 6.500-.8 0-1.500-.2-2.200-.6v.1c0 2.300 1.700 4.300 3.900 4.800-.7.200-1.500.2-2.200.1.600 2 2.400 3.400 4.500 3.400A9.800 9.800 0 0 1 0 19.600 13.700 13.700 0 0 0 7.500 21.800c9 0 14-7.500 14-14v-.6c1-.7 1.800-1.600 2.500-2.600z" fill="#344b57"/></g><circle cx="1793.9" cy="689.8" r="10" fill="#344b57"/><text transform="translate(1793.9 693.3)" font-size="9.5" fill="#c9d0d4" text-anchor="middle" font-weight="bold">G+</text><circle cx="1903.8" cy="689.8" r="10" fill="#111"/><path d="M1904 683.5 q-4.5 0-4.5 4 q0 2 1.400 2.600 l.5-1.400 q-.6-.5-.6-1.500 q0-2.400 3-2.400 q2.600 0 2.600 2.300 q0 3-2 3 q-1.200 0-.9-1.200 l.7-2.600 q0-1-1-1 q-1.200 0-1.200 1.700 l.3 1.200 l-1.500 6 q-.2 1.500 0 2.700 q1-1.200 1.500-2.800 l.6-2.300 q.6.900 1.800.900 q3.200 0 3.200-4 q0-3.300-3.900-3.300z" fill="#fff"/></svg>
<span class="t" style="left:1597.72px;top:549.90px;font-size:80px;color:#344b57;transform:scaleX(0.9396);transform-origin:0 0;">90.1k</span>
<span class="t" style="left:1456.27px;top:677.35px;font-size:20.5px;color:#2b2b2b;transform:scaleX(1.0404);transform-origin:0 0;">33.3k</span>
<span class="t" style="left:1568.66px;top:677.35px;font-size:20.5px;color:#2b2b2b;transform:scaleX(1.0366);transform-origin:0 0;">29.3k</span>
<span class="t" style="left:1681.47px;top:677.35px;font-size:20.5px;color:#2b2b2b;transform:scaleX(1.0264);transform-origin:0 0;">26.5k</span>
<span class="t" style="left:1808.94px;top:677.35px;font-size:20.5px;color:#2b2b2b;transform:scaleX(0.9703);transform-origin:0 0;">1k</span>
<span class="t" style="left:1920.26px;top:677.35px;font-size:20.5px;color:#2b2b2b;transform:scaleX(1.0972);transform-origin:0 0;">40</span>
<svg style="left:0;top:0" width="2674" height="1788" viewBox="0 0 2674 1788"><rect x="2120.3" y="427.3" width="49.2" height="23" fill="#93cde8"/><rect x="2102.95" y="456.55" width="83.90" height="201.10" fill="none" stroke="#93cde8" stroke-width="14.3"/><rect x="2121.8" y="550.2" width="48.2" height="89.8" fill="#90d0ae"/><rect x="2136.7000000000003" y="443.7" width="18" height="3.6" fill="#fff"/><rect x="2143.9" y="436.5" width="3.6" height="18" fill="#fff"/><rect x="2302.5" y="427.3" width="48.9" height="23" fill="#dedede"/><rect x="2285.15" y="456.55" width="83.60" height="201.10" fill="none" stroke="#dedede" stroke-width="14.3"/><rect x="2304" y="569.8" width="50.1" height="70.2" fill="#808080"/><rect x="2486.3" y="427.3" width="49.2" height="23" fill="#93cde8"/><rect x="2468.95" y="456.55" width="83.90" height="201.10" fill="none" stroke="#93cde8" stroke-width="14.3"/><rect x="2487.8" y="638" width="48.5" height="1.4" fill="#c98a8f"/><rect x="2502.7000000000003" y="443.7" width="18" height="3.6" fill="#fff"/></svg>
<span class="t" style="left:2098.00px;top:666.52px;font-size:76px;color:#344b57;transform:scaleX(1.0995);transform-origin:0 0;">55</span>
<span class="t" style="left:2188.48px;top:677.19px;font-size:41px;color:#344b57;transform:scaleX(0.9435);transform-origin:0 0;">%</span>
<span class="t" style="left:2281.03px;top:666.52px;font-size:76px;color:#344b57;transform:scaleX(1.0973);transform-origin:0 0;">42</span>
<span class="t" style="left:2371.68px;top:677.19px;font-size:41px;color:#344b57;transform:scaleX(0.9435);transform-origin:0 0;">%</span>
<span class="t" style="left:2486.56px;top:666.52px;font-size:76px;color:#344b57;transform:scaleX(1.0893);transform-origin:0 0;">2</span>
<span class="t" style="left:2530.38px;top:677.19px;font-size:41px;color:#344b57;transform:scaleX(0.9435);transform-origin:0 0;">%</span>
<div class="abs" style="left:162.89999999999998px;top:1169.4px;width:358px;height:358px;border-radius:50%;background:#fff;box-shadow:3px 5px 12px rgba(0,0,0,.28),0 0 3px rgba(0,0,0,.08)"></div>
<svg style="left:0;top:0" width="2674" height="1788" viewBox="0 0 2674 1788"><path d="M341.9 1348.4 L341.90 1187.80 A160.6 160.6 0 1 1 201.17 1271.03 Z" fill="#c76f32" stroke="#fff" stroke-width="2" stroke-linejoin="round"/><path d="M341.9 1348.4 L201.17 1271.03 A160.6 160.6 0 0 1 301.96 1192.85 Z" fill="#00857f" stroke="#fff" stroke-width="2" stroke-linejoin="round"/><path d="M341.9 1348.4 L301.96 1192.85 A160.6 160.6 0 0 1 341.90 1187.80 Z" fill="#32c481" stroke="#fff" stroke-width="2" stroke-linejoin="round"/><text transform="translate(383.0 1423.7) scale(1.03 1)" font-size="16" fill="#fff" text-anchor="middle">83%</text><text transform="translate(291.7 1290.0) scale(1.03 1)" font-size="16" fill="#fff" text-anchor="middle">13%</text><clipPath id="c4"><rect x="281.9" y="1228.4" width="59" height="80"/></clipPath><g clip-path="url(#c4)"><text transform="translate(332.7 1273.4) scale(1.03 1)" font-size="16" fill="#fff" text-anchor="middle">4%</text></g><rect x="550.8" y="1495.5" width="15.2" height="15" rx="2.5" fill="#00857f"/><text transform="translate(578.3 1509.0)" font-size="17" fill="#333">Brand A</text><rect x="550.8" y="1518.8" width="15.2" height="15" rx="2.5" fill="#c76f32"/><text transform="translate(578.3 1532.3)" font-size="17" fill="#333">Brand B</text><rect x="550.8" y="1542.1" width="15.2" height="15" rx="2.5" fill="#32c481"/><text transform="translate(578.3 1555.6)" font-size="17" fill="#333">Brand C</text></svg>
<div class="abs" style="left:800.1px;top:1169.4px;width:358px;height:358px;border-radius:50%;background:#fff;box-shadow:3px 5px 12px rgba(0,0,0,.28),0 0 3px rgba(0,0,0,.08)"></div>
<svg style="left:0;top:0" width="2674" height="1788" viewBox="0 0 2674 1788"><path d="M979.1 1348.4 L979.10 1187.80 A160.6 160.6 0 1 1 824.88 1393.21 Z" fill="#c76f32" stroke="#fff" stroke-width="2" stroke-linejoin="round"/><path d="M979.1 1348.4 L824.88 1393.21 A160.6 160.6 0 0 1 955.97 1189.47 Z" fill="#00857f" stroke="#fff" stroke-width="2" stroke-linejoin="round"/><path d="M979.1 1348.4 L955.97 1189.47 A160.6 160.6 0 0 1 979.10 1187.80 Z" fill="#32c481" stroke="#fff" stroke-width="2" stroke-linejoin="round"/><text transform="translate(1043.6 1402.7) scale(1.03 1)" font-size="16" fill="#fff" text-anchor="middle">71%</text><text transform="translate(910.4 1309.8) scale(1.03 1)" font-size="16" fill="#fff" text-anchor="middle">27%</text><rect x="1188.6" y="1495.5" width="15.2" height="15" rx="2.5" fill="#00857f"/><text transform="translate(1216.1 1509.0)" font-size="17" fill="#333">Brand A</text><rect x="1188.6" y="1518.8" width="15.2" height="15" rx="2.5" fill="#c76f32"/><text transform="translate(1216.1 1532.3)" font-size="17" fill="#333">Brand B</text><rect x="1188.6" y="1542.1" width="15.2" height="15" rx="2.5" fill="#32c481"/><text transform="translate(1216.1 1555.6)" font-size="17" fill="#333">Brand C</text></svg>
<svg style="left:0;top:0" width="2674" height="1788" viewBox="0 0 2674 1788"><rect x="1519.4" y="1162.8" width="425.8" height="287.1" fill="#fff" stroke="#e4e4e4"/><rect x="1527.0" y="1162.8" width="30.3" height="287.1" fill="#e6f2f2"/><rect x="1561.6" y="1162.8" width="30.3" height="287.1" fill="#e6f2f2"/><rect x="1596.2" y="1162.8" width="30.3" height="287.1" fill="#e6f2f2"/><rect x="1630.8" y="1162.8" width="30.3" height="287.1" fill="#e6f2f2"/><rect x="1665.3" y="1162.8" width="30.3" height="287.1" fill="#e6f2f2"/><rect x="1699.9" y="1162.8" width="30.3" height="287.1" fill="#e6f2f2"/><rect x="1734.5" y="1162.8" width="30.3" height="287.1" fill="#e6f2f2"/><rect x="1769.0" y="1162.8" width="30.3" height="287.1" fill="#e6f2f2"/><rect x="1803.6" y="1162.8" width="30.3" height="287.1" fill="#e6f2f2"/><rect x="1838.2" y="1162.8" width="30.3" height="287.1" fill="#e6f2f2"/><rect x="1872.8" y="1162.8" width="30.3" height="287.1" fill="#e6f2f2"/><rect x="1907.3" y="1162.8" width="30.3" height="287.1" fill="#e6f2f2"/><path d="M1519.4 1378.1 H1945.2 M1519.4 1306.3 H1945.2 M1519.4 1234.6 H1945.2 " stroke="#000" stroke-opacity="0.06" stroke-width="1" fill="none"/><rect x="1527.0" y="1422.2" width="30.3" height="27.7" fill="#00857f"/><rect x="1561.6" y="1206.9" width="30.3" height="243.0" fill="#00857f"/><rect x="1596.2" y="1286.5" width="30.3" height="163.4" fill="#00857f"/><rect x="1630.8" y="1367.2" width="30.3" height="82.7" fill="#00857f"/><rect x="1665.3" y="1292.0" width="30.3" height="157.9" fill="#00857f"/><rect x="1699.9" y="1217.9" width="30.3" height="232.0" fill="#00857f"/><rect x="1734.5" y="1283.4" width="30.3" height="166.5" fill="#00857f"/><rect x="1769.0" y="1175.9" width="30.3" height="274.0" fill="#00857f"/><rect x="1803.6" y="1277.6" width="30.3" height="172.3" fill="#00857f"/><rect x="1838.2" y="1245.1" width="30.3" height="204.8" fill="#00857f"/><rect x="1872.8" y="1279.5" width="30.3" height="170.4" fill="#00857f"/><rect x="1907.3" y="1406.3" width="30.3" height="43.6" fill="#00857f"/><rect x="1519.7" y="1129.7" width="15.2" height="15" rx="2.5" fill="#00857f"/><text transform="translate(1550.0 1142.8) scale(1.03 1)" font-size="16.5" fill="#333">Brand A</text><text transform="translate(1503.8 1454.9) scale(1.07 1)" font-size="14.3" fill="#333" text-anchor="end">0</text><text transform="translate(1503.8 1383.1) scale(1.07 1)" font-size="14.3" fill="#333" text-anchor="end">500</text><text transform="translate(1503.8 1311.3) scale(1.07 1)" font-size="14.3" fill="#333" text-anchor="end">1.00k</text><text transform="translate(1503.8 1239.6) scale(1.07 1)" font-size="14.3" fill="#333" text-anchor="end">1.50k</text><text transform="translate(1503.8 1167.8) scale(1.07 1)" font-size="14.3" fill="#333" text-anchor="end">2.00k</text><text transform="translate(1542.2 1477.7) scale(1.06 1)" font-size="14.3" fill="#333" text-anchor="middle">Q3 2016</text><text transform="translate(1611.3 1477.7) scale(1.06 1)" font-size="14.3" fill="#333" text-anchor="middle">Q1 2017</text><text transform="translate(1680.5 1477.7) scale(1.06 1)" font-size="14.3" fill="#333" text-anchor="middle">Q3 2017</text><text transform="translate(1749.6 1477.7) scale(1.06 1)" font-size="14.3" fill="#333" text-anchor="middle">Q1 2018</text><text transform="translate(1818.8 1477.7) scale(1.06 1)" font-size="14.3" fill="#333" text-anchor="middle">Q3 2018</text><text transform="translate(1887.9 1477.7) scale(1.06 1)" font-size="14.3" fill="#333" text-anchor="middle">Q1 2019</text><text transform="translate(1731.8 1519.0)" font-size="20" fill="#2b2b2b" text-anchor="middle">Quarter</text><text transform="translate(1438.5 1306.7) rotate(-90) scale(1.04 1)" font-size="20" fill="#2b2b2b" text-anchor="middle">Traffic</text></svg>
<div class="pill" style="left:1732.5px;top:1543.5px;width:108.2px;height:30.5px"></div>
<span class="t" style="left:1455.65px;top:1546.99px;font-size:21px;color:#2c2c2c;transform:scaleX(0.9676);transform-origin:0 0;font-weight:bold;">Day</span>
<span class="t" style="left:1540.00px;top:1546.99px;font-size:21px;color:#2c2c2c;transform:scaleX(0.9541);transform-origin:0 0;font-weight:bold;">Week</span>
<span class="t" style="left:1637.58px;top:1546.99px;font-size:21px;color:#2c2c2c;transform:scaleX(1.0166);transform-origin:0 0;font-weight:bold;">Month</span>
<span class="t" style="left:1747.01px;top:1546.99px;font-size:21px;color:#2c2c2c;transform:scaleX(0.9920);transform-origin:0 0;font-weight:bold;">Quarter</span>
<span class="t" style="left:1868.21px;top:1546.99px;font-size:21px;color:#2c2c2c;transform:scaleX(0.9658);transform-origin:0 0;font-weight:bold;">Year</span>
<svg style="left:0;top:0" width="2674" height="1788" viewBox="0 0 2674 1788"><rect x="2157.2" y="1173.4" width="424.2" height="288.0" fill="#fff" stroke="#e4e4e4"/><rect x="2190.3" y="1173.4" width="61.3" height="288.0" fill="#e5f2f2"/><rect x="2289.2" y="1173.4" width="61.3" height="288.0" fill="#e8e9ed"/><rect x="2388.1" y="1173.4" width="61.3" height="288.0" fill="#f9ecea"/><rect x="2486.9" y="1173.4" width="61.3" height="288.0" fill="#f9f4ea"/><path d="M2157.2 1389.4 H2581.4 M2157.2 1317.4 H2581.4 M2157.2 1245.4 H2581.4 " stroke="#000" stroke-opacity="0.06" stroke-width="1" fill="none"/><rect x="2190.3" y="1260.5" width="61.3" height="200.9" fill="#00857f"/><rect x="2289.2" y="1319.6" width="61.3" height="141.8" fill="#212946"/><rect x="2388.1" y="1300.1" width="61.3" height="161.3" fill="#c7482f"/><rect x="2486.9" y="1204.7" width="61.3" height="256.7" fill="#c7942b"/><rect x="2157.2" y="1139.4" width="15.2" height="15" rx="2.5" fill="#00857f"/><text transform="translate(2186.8 1152.5) scale(1.03 1)" font-size="16.5" fill="#333">Brand A</text><text transform="translate(2141.9 1466.4) scale(1.1 1)" font-size="14.3" fill="#333" text-anchor="end">0</text><text transform="translate(2141.9 1394.4) scale(1.1 1)" font-size="14.3" fill="#333" text-anchor="end">200</text><text transform="translate(2141.9 1322.4) scale(1.1 1)" font-size="14.3" fill="#333" text-anchor="end">400</text><text transform="translate(2141.9 1250.4) scale(1.1 1)" font-size="14.3" fill="#333" text-anchor="end">600</text><text transform="translate(2141.9 1178.4) scale(1.1 1)" font-size="14.3" fill="#333" text-anchor="end">800</text><text transform="translate(2221.0 1488.0)" font-size="17" fill="#333" text-anchor="middle">Sign Ups</text><text transform="translate(2318.9 1488.8)" font-size="17" fill="#333" text-anchor="middle">Jobs</text><text transform="translate(2418.0 1484.0)" font-size="17" fill="#333" text-anchor="middle">Case</text><text transform="translate(2418.0 1503.8)" font-size="17" fill="#333" text-anchor="middle">Studies</text><text transform="translate(2516.7 1483.0)" font-size="17" fill="#333" text-anchor="middle">White</text><text transform="translate(2516.7 1503.1)" font-size="17" fill="#333" text-anchor="middle">Papers</text><text transform="translate(2369.3 1531.0)" font-size="20" fill="#2b2b2b" text-anchor="middle">Website Engagement Type</text><text transform="translate(2076.0 1317.5) rotate(-90) scale(1.015 1)" font-size="20" fill="#2b2b2b" text-anchor="middle">Website Engagement</text></svg>
<div class="abs" style="left:0;top:1728px;width:2674px;height:60px;background:linear-gradient(rgba(0,0,0,0),rgba(0,0,0,.012) 40%,rgba(0,0,0,.05))"></div>
</body></html>
